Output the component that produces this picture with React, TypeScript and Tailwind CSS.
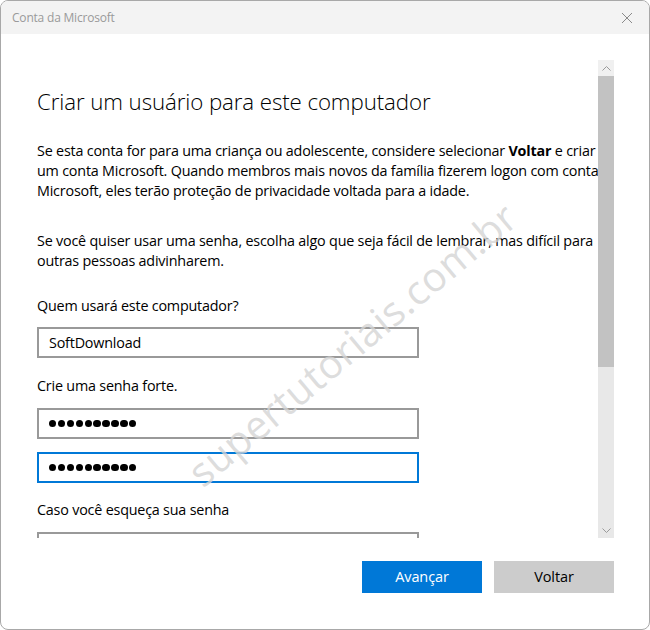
import React from "react";

export default function App() {
  const font = "font-['Open_Sans',_'Noto_Sans',_sans-serif]";
  const body = "text-[14.35px] leading-[20px] tracking-[-0.2px]";
  return (
    <div className={`relative w-[650px] h-[630px] bg-white overflow-hidden ${font} text-black`}>
      <div className="w-full h-full border border-[#a8a8a8] rounded-[8px] overflow-hidden flex flex-col bg-white">
        {/* Title bar */}
        <div className="h-[33px] shrink-0 bg-[#f3f3f3] flex items-center justify-between pl-[11px] pr-[16px]">
          <span className="text-[12px] text-[#9a9a9a] tracking-[-0.2px]">Conta da Microsoft</span>
          <svg width="12" height="12" viewBox="0 0 12 12" className="mt-[1px]">
            <path d="M1 1 L11 11 M11 1 L1 11" stroke="#8a8a8a" strokeWidth="1" fill="none" />
          </svg>
        </div>
        {/* body */}
        <div className="flex-1 flex flex-col">
          <div className="h-[26px] shrink-0" />
          <div className="flex h-[478px] shrink-0">
            <div className="w-[597px] shrink-0 overflow-hidden">
              <div className="w-[614px] pl-[36px] pt-[26px]">
                <h1 className="text-[22.3px] font-light leading-[32px] tracking-[-0.1px]">
                  Criar um usuário para este computador
                </h1>
                <p className={`mt-[23px] ${body}`}>
                  Se esta conta for para uma criança ou adolescente, considere selecionar{" "}
                  <b className="font-bold">Voltar</b> e criar um conta Microsoft. Quando membros mais novos da família fizerem logon com conta Microsoft, eles terão proteção de privacidade voltada para a idade.
                </p>
                <p className={`mt-[30px] ${body}`}>
                  Se você quiser usar uma senha, escolha algo que seja fácil de lembrar, mas difícil para outras pessoas adivinharem.
                </p>
                <div className={`mt-[25px] ${body}`}>Quem usará este computador?</div>
                <div className={`mt-[11px] w-[382px] h-[31px] border-2 border-[#999999] flex items-center pl-[10px] ${body}`}>
                  SoftDownload
                </div>
                <div className={`mt-[18px] ${body}`}>Crie uma senha forte.</div>
                <div className="mt-[12px] w-[382px] h-[31px] border-2 border-[#999999] flex items-center pl-[10px] gap-[1.5px]">
                  {Array.from({ length: 10 }).map((_, i) => (
                    <span key={i} className="w-[7.4px] h-[7.4px] rounded-full bg-black" />
                  ))}
                </div>
                <div className="mt-[13px] w-[382px] h-[31px] border-2 border-[#0078d7] flex items-center pl-[10px] gap-[1.5px]">
                  {Array.from({ length: 10 }).map((_, i) => (
                    <span key={i} className="w-[7.4px] h-[7.4px] rounded-full bg-black" />
                  ))}
                </div>
                <div className={`mt-[17px] ${body}`}>Caso você esqueça sua senha</div>
                <div className="mt-[12px] w-[382px] h-[31px] border-2 border-[#999999]" />
              </div>
            </div>
            {/* scrollbar */}
            <div className="w-[16px] shrink-0 flex flex-col bg-[#e8e8e8]">
              <div className="h-[16px] bg-[#f0f0f0] flex items-center justify-center">
                <svg width="9" height="5" viewBox="0 0 9 5">
                  <path d="M0.5 4.5 L4.5 0.5 L8.5 4.5" stroke="#9a9a9a" fill="none" />
                </svg>
              </div>
              <div className="h-[291px] bg-[#c2c2c2]" />
              <div className="flex-1" />
              <div className="h-[16px] flex items-center justify-center">
                <svg width="9" height="5" viewBox="0 0 9 5">
                  <path d="M0.5 0.5 L4.5 4.5 L8.5 0.5" stroke="#9a9a9a" fill="none" />
                </svg>
              </div>
            </div>
          </div>
          {/* buttons */}
          <div className="flex justify-end gap-[12px] pr-[35px] mt-[23px]">
            <button className="w-[120px] h-[32px] bg-[#0078d7] text-white text-[14.5px] tracking-[-0.1px]">Avançar</button>
            <button className="w-[120px] h-[32px] bg-[#cccccc] text-black text-[14.5px] tracking-[-0.1px]">Voltar</button>
          </div>
        </div>
      </div>
      {/* watermark */}
      <div className="absolute left-[132px] top-[314px] w-[440px] text-center text-[40px] leading-[60px] text-[#d4d4d4]/80 -rotate-[40deg] pointer-events-none select-none tracking-[0.5px]">
        supertutoriais.com.br
      </div>
    </div>
  );
}
